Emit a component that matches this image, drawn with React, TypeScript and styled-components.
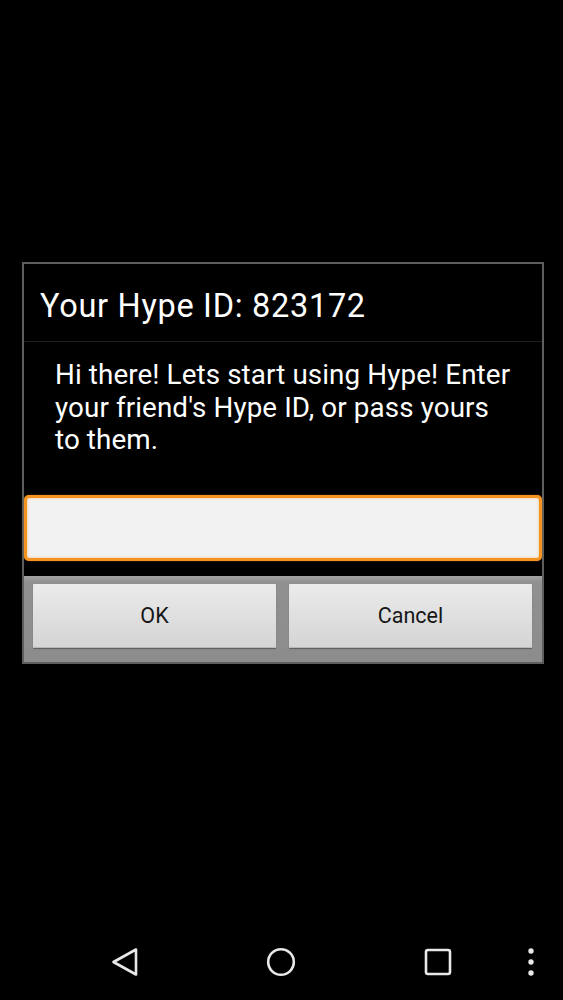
import styled, { createGlobalStyle } from 'styled-components';

const GlobalStyle = createGlobalStyle`
  html, body {
    margin: 0;
    padding: 0;
    background: #000;
  }
  * {
    box-sizing: border-box;
  }
`;

const Screen = styled.div`
  width: 563px;
  height: 1000px;
  background: #000;
  display: flex;
  flex-direction: column;
  font-family: Roboto, 'Noto Sans', sans-serif;
`;

const Content = styled.div`
  flex: 1;
  padding: 262px 19px 0 22px;
`;

const Dialog = styled.div`
  border: 2px solid #5e5e5e;
  background: #000;
  display: flex;
  flex-direction: column;
`;

const TitleBar = styled.div`
  height: 78px;
  padding: 6px 0 0 16px;
  display: flex;
  align-items: center;
  border-bottom: 1px solid #1f1f1f;
  color: #fff;
  font-size: 32.5px;
  letter-spacing: 0.7px;
`;

const Message = styled.p`
  margin: 0;
  padding: 17px 28px 38px 31px;
  color: #fff;
  font-size: 27.8px;
  letter-spacing: 0.1px;
  line-height: 32.5px;
`;

const Field = styled.input`
  display: block;
  width: 100%;
  height: 66px;
  margin: 0;
  border: 3px solid #f39320;
  border-radius: 5px;
  background: #f2f2f2;
  box-shadow: inset 0 0 3px rgba(245, 150, 40, 0.55), 0 0 1px #f39320;
  outline: none;
`;

const ButtonPanel = styled.div`
  margin-top: 15px;
  padding: 8px 10px 14px 9px;
  background: linear-gradient(#a3a3a3 0, #909090 6px, #8c8c8c 100%);
  display: grid;
  grid-template-columns: 1fr 1fr;
  gap: 13px;
`;

const DialogButton = styled.button`
  height: 64px;
  border: none;
  border-radius: 1px;
  background: linear-gradient(#ebebeb, #d4d4d4);
  box-shadow: 0 1px 1px rgba(0, 0, 0, 0.35), inset 0 -1px 0 #b9b9b9;
  color: #161616;
  font-family: Roboto, 'Noto Sans', sans-serif;
  font-size: 21.5px;
  padding: 0;
`;

const NavBar = styled.div`
  height: 76px;
  display: flex;
  align-items: center;
`;

const NavSlot = styled.div<{ $w: number }>`
  width: ${(p) => p.$w}px;
  display: flex;
  justify-content: center;
  align-items: center;
`;

export default function App() {
  return (
    <>
      <GlobalStyle />
      <Screen>
        <Content>
          <Dialog>
            <TitleBar>Your Hype ID: 823172</TitleBar>
            <Message>
              Hi there! Lets start using Hype! Enter your friend's Hype ID, or pass yours to them.
            </Message>
            <Field type="text" />
            <ButtonPanel>
              <DialogButton>OK</DialogButton>
              <DialogButton>Cancel</DialogButton>
            </ButtonPanel>
          </Dialog>
        </Content>
        <NavBar>
          <NavSlot $w={60} />
          <NavSlot $w={130}>
            <svg width="30" height="32" viewBox="0 0 30 32">
              <path
                d="M26 3.5 L3.5 16 L26 28.5 Z"
                fill="none"
                stroke="#e8e8e8"
                strokeWidth="2.6"
                strokeLinejoin="round"
              />
            </svg>
          </NavSlot>
          <NavSlot $w={182}>
            <svg width="32" height="32" viewBox="0 0 32 32">
              <circle cx="16" cy="16" r="12.8" fill="none" stroke="#e8e8e8" strokeWidth="2.6" />
            </svg>
          </NavSlot>
          <NavSlot $w={132}>
            <svg width="30" height="30" viewBox="0 0 30 30">
              <rect x="3" y="3" width="24" height="24" rx="2" fill="none" stroke="#e8e8e8" strokeWidth="2.6" />
            </svg>
          </NavSlot>
          <NavSlot $w={54}>
            <svg width="10" height="30" viewBox="0 0 10 30">
              <circle cx="5" cy="4" r="2.7" fill="#e8e8e8" />
              <circle cx="5" cy="15" r="2.7" fill="#e8e8e8" />
              <circle cx="5" cy="26" r="2.7" fill="#e8e8e8" />
            </svg>
          </NavSlot>
        </NavBar>
      </Screen>
    </>
  );
}
